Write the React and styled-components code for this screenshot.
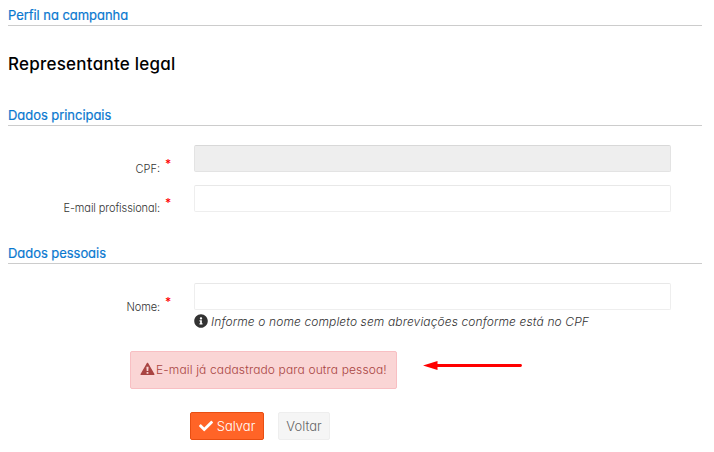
import React from "react";
import styled, { createGlobalStyle } from "styled-components";
import { FaCheck, FaInfoCircle } from "react-icons/fa";

const GlobalStyle = createGlobalStyle`
  * { box-sizing: border-box; }
  body {
    margin: 0;
    background: #fff;
    color: #333;
    font-family: Inter, "Liberation Sans", sans-serif;
    font-feature-settings: "cv11" 1;
  }
`;

const Page = styled.main`
  width: 714px;
  height: 452px;
  padding: 0 12px 0 8px;
  overflow: hidden;
  white-space: nowrap;
`;

const SectionTitle = styled.h2`
  margin: 0;
  height: 26px;
  padding-top: 5px;
  border-bottom: 1px solid #ccc;
  color: #0a78cf;
  font-size: 13px;
  font-weight: 400;
  line-height: 20px;
  letter-spacing: -0.05px;
  -webkit-text-stroke: 0.2px;
`;

const PageTitle = styled.h1`
  margin: 25px 0 23px;
  color: #000;
  font-size: 17px;
  font-weight: 500;
  line-height: 26px;
  letter-spacing: 0.24px;
`;

const Fields = styled.div`
  display: grid;
  gap: 13px;
  padding: 19px 31px 0 0;
  margin-bottom: ${(p) => p.$after || 0}px;
`;

const Field = styled.div`
  display: grid;
  grid-template-columns: 163px 477px;
  column-gap: 23px;
`;

const Label = styled.label`
  display: flex;
  justify-content: flex-end;
  gap: 5px;
  padding-top: ${(p) => p.$top || 14}px;
  height: 27px;
  font-size: 11px;
  font-weight: 300;
  line-height: 20px;
  letter-spacing: ${(p) => p.$tracking || 0}px;
`;

const Required = styled.span`
  width: 6px;
  margin-top: -5px;
  color: #f00;
  font-size: 12px;
  font-weight: 500;
  letter-spacing: 0;
`;

const Input = styled.input`
  display: block;
  width: 477px;
  height: 27px;
  padding: 0 8px;
  border: 1px solid #eee;
  border-top-color: #e8e8e8;
  border-radius: 2px;
  background: #fff;
  &:disabled {
    border-color: #e3e3e3;
    border-top-color: #d8d8d8;
    background: #eee;
  }
`;

const Hint = styled.p`
  display: flex;
  align-items: center;
  gap: 3px;
  height: 20px;
  margin: 1px 0 0;
  font-size: 12px;
  font-style: italic;
  font-weight: 300;
  letter-spacing: 0.12px;
`;

const Notice = styled.div`
  display: flex;
  align-items: flex-start;
  gap: 26px;
  margin: 20px 0 0 122px;
`;

const Alert = styled.div`
  display: flex;
  align-items: center;
  gap: 1px;
  width: 267px;
  height: 38px;
  padding: 0 0 2px 9px;
  border: 1px solid #f8bfc3;
  border-radius: 2px;
  background: #fad5d5;
  color: #a94442;
  font-size: 12px;
  font-weight: 300;
  letter-spacing: 0.13px;
`;

const Arrow = styled.svg`
  margin-top: 9px;
`;

const Actions = styled.div`
  display: flex;
  gap: 14px;
  margin: 23px 0 0 182px;
`;

const Button = styled.button`
  display: flex;
  align-items: center;
  justify-content: center;
  gap: 4px;
  width: ${(p) => (p.$primary ? 74 : 52)}px;
  height: 28px;
  padding: 0;
  border: 1px solid ${(p) => (p.$primary ? "#e84e12" : "#eee")};
  border-radius: 2px;
  background: ${(p) => (p.$primary ? "#ff6427" : "#f5f5f5")};
  color: ${(p) => (p.$primary ? "#fff" : "#666")};
  font: 300 13px Inter, sans-serif;
  font-feature-settings: "cv11" 1;
`;

function WarningIcon() {
  return (
    <svg width="15" height="14" viewBox="0 0 15 14">
      <path
        d="M7.5 1.4L13.8 12.4H1.2Z"
        fill="currentColor"
        stroke="currentColor"
        strokeWidth="1.4"
        strokeLinejoin="round"
      />
      <path d="M6.4 4.8H8.6L8.3 9H6.7ZM6.6 10H8.4V11.7H6.6Z" fill="#fad5d5" />
    </svg>
  );
}

function FormField({ label, top, tracking, disabled, hint }) {
  return (
    <Field>
      <Label $top={top} $tracking={tracking}>
        {label}
        <Required>*</Required>
      </Label>
      <div>
        <Input aria-label={label} disabled={disabled} />
        {hint && (
          <Hint>
            <FaInfoCircle size={14} />
            <span>{hint}</span>
          </Hint>
        )}
      </div>
    </Field>
  );
}

export default function App() {
  return (
    <Page>
      <GlobalStyle />
      <SectionTitle>Perfil na campanha</SectionTitle>
      <PageTitle>Representante legal</PageTitle>
      <SectionTitle>Dados principais</SectionTitle>
      <Fields $after={26}>
        <FormField label="CPF:" disabled />
        <FormField label="E-mail profissional:" top={13} tracking={-0.1} />
      </Fields>
      <SectionTitle>Dados pessoais</SectionTitle>
      <Fields>
        <FormField
          label="Nome:"
          tracking={-0.1}
          hint="Informe o nome completo sem abreviações conforme está no CPF"
        />
      </Fields>
      <Notice>
        <Alert role="alert">
          <WarningIcon />
          <span>E-mail já cadastrado para outra pessoa!</span>
        </Alert>
        <Arrow width="100" height="12" viewBox="0 0 100 12" fill="#f00">
          <path d="M0 5.5L14.5 1V10Z" />
          <path d="M13 5.5H97.5" stroke="#f00" strokeWidth="2.8" strokeLinecap="round" />
        </Arrow>
      </Notice>
      <Actions>
        <Button $primary>
          <FaCheck size={14} />
          Salvar
        </Button>
        <Button>Voltar</Button>
      </Actions>
    </Page>
  );
}
